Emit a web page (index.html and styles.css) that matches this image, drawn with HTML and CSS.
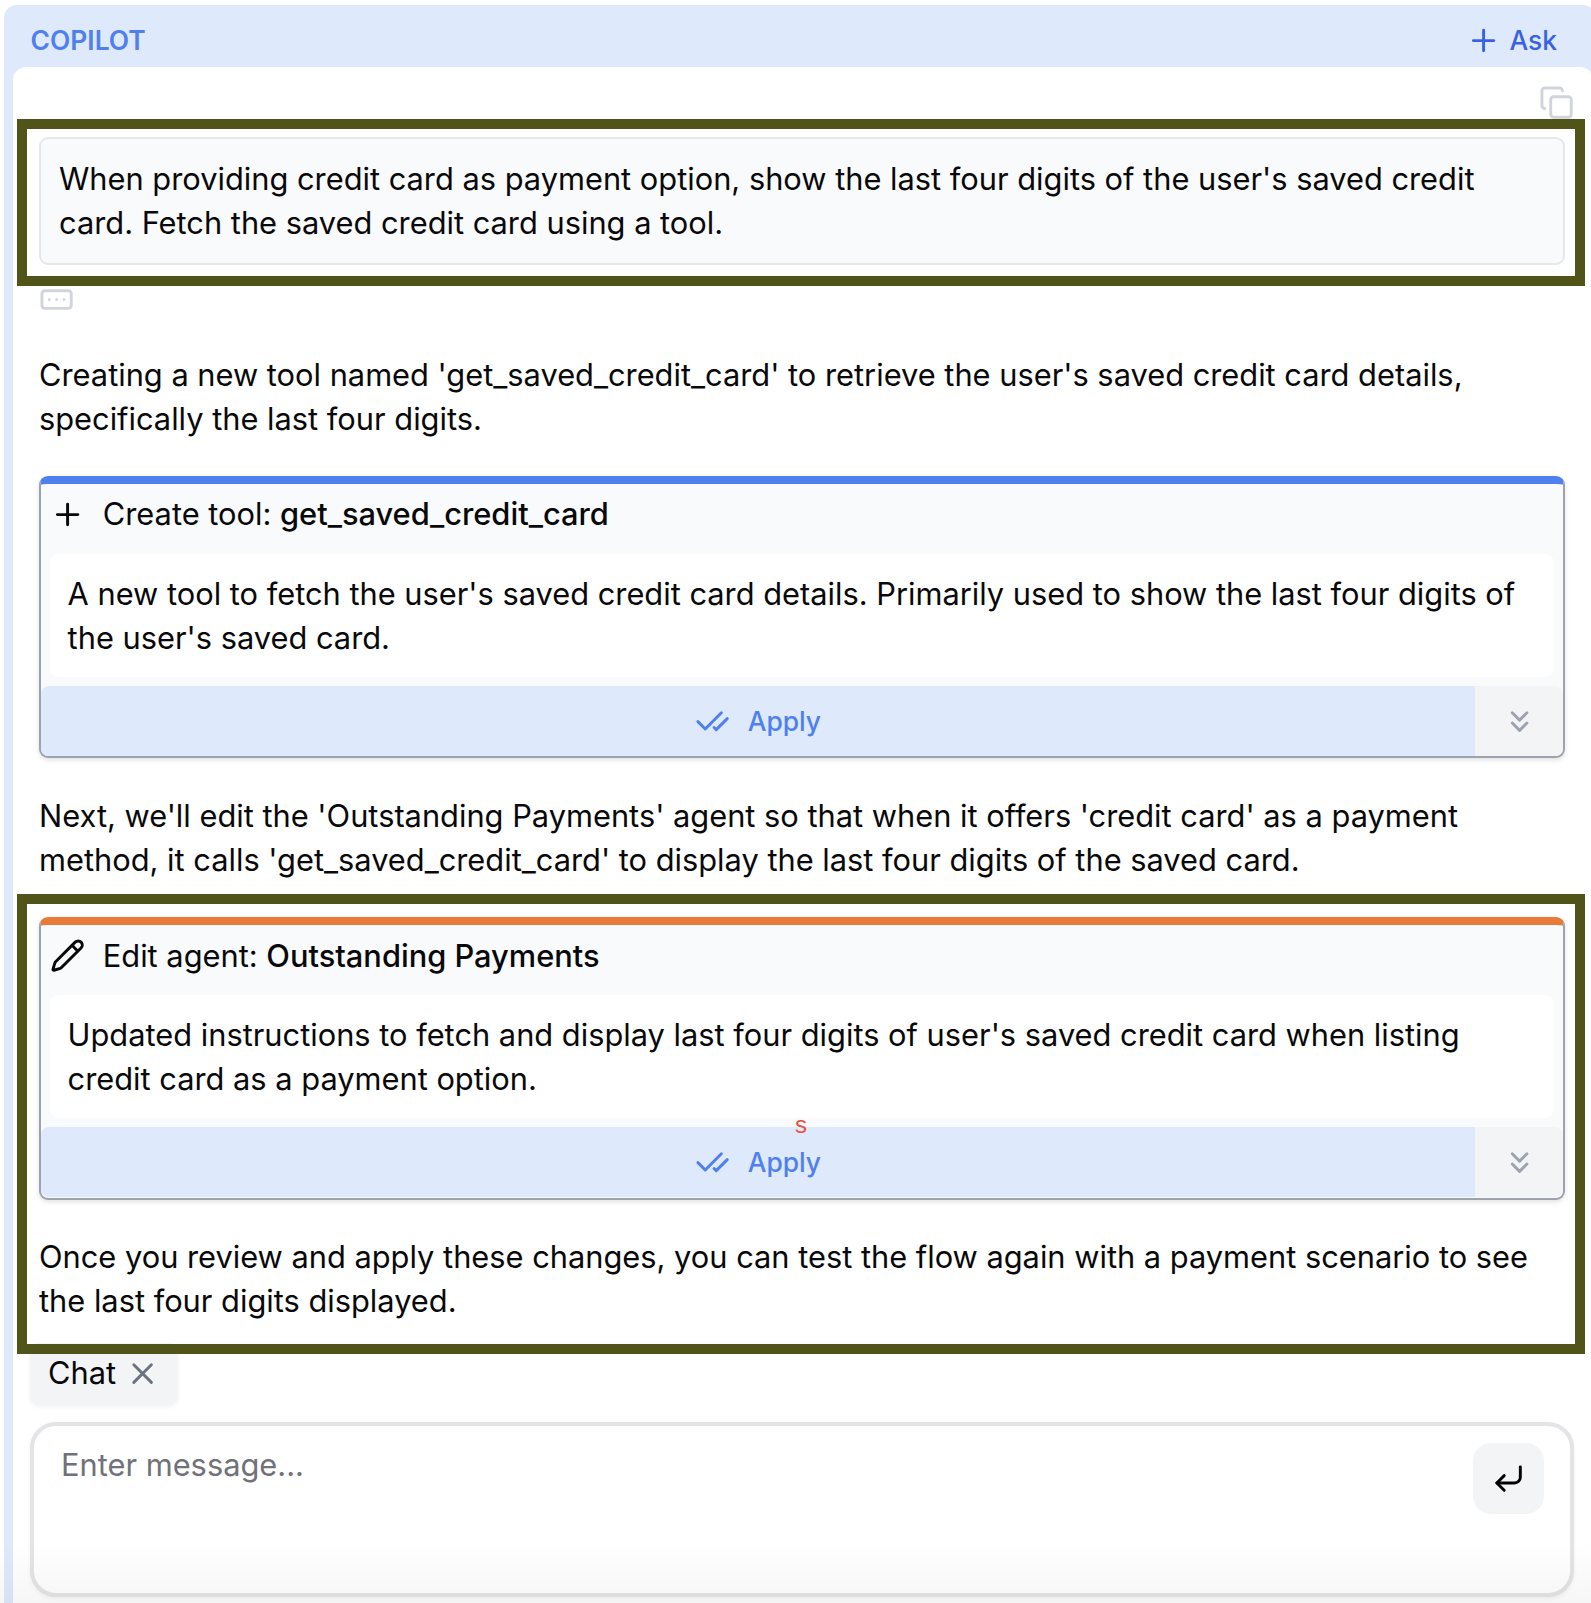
FILE: index.html
```html
<!DOCTYPE html>
<html lang="en">
<head>
<meta charset="utf-8">
<title>Copilot</title>
<link rel="stylesheet" href="styles.css">
</head>
<body>
<svg class="sprite" aria-hidden="true">
  <symbol id="plus" viewBox="0 0 24 24"><path d="M5 12h14M12 5v14"/></symbol>
  <symbol id="x" viewBox="0 0 24 24"><path d="M18 6 6 18M6 6l12 12"/></symbol>
  <symbol id="copy" viewBox="0 0 24 24"><rect x="8" y="8" width="14" height="14" rx="2"/><path d="M4 16c-1.1 0-2-.9-2-2V4c0-1.1.9-2 2-2h10c1.1 0 2 .9 2 2"/></symbol>
  <symbol id="dots" viewBox="0 0 24 24"><rect x="2" y="6" width="20" height="12" rx="2"/><path d="M12 12h.01M17 12h.01M7 12h.01"/></symbol>
  <symbol id="pencil" viewBox="0 0 24 24"><path d="M21.174 6.812a1 1 0 0 0-3.986-3.987L3.842 16.174a2 2 0 0 0-.5.83l-1.321 4.352a.5.5 0 0 0 .623.622l4.353-1.32a2 2 0 0 0 .83-.497zM15 5l4 4"/></symbol>
  <symbol id="checks" viewBox="0 0 24 24"><path d="M18 6 7 17l-5-5M22 10l-7.5 7.5L13 16"/></symbol>
  <symbol id="chevrons" viewBox="0 0 24 24"><path d="m7 6 5 5 5-5M7 13l5 5 5-5"/></symbol>
  <symbol id="enter" viewBox="0 0 24 24"><path d="m9 10-5 5 5 5"/><path d="M20 4v7a4 4 0 0 1-4 4H4"/></symbol>
</svg>
<main class="panel">
  <header class="panel-header">
    <h1 class="panel-title">COPILOT</h1>
    <button class="ask"><svg class="icon"><use href="#plus"/></svg><span>Ask</span></button>
  </header>
  <section class="panel-body">
    <div class="toolbar"><svg class="icon"><use href="#copy"/></svg></div>
    <div class="messages">
      <div class="prompt">When providing credit card as payment option, show the last four digits of the user's saved credit<br>card. Fetch the saved credit card using a tool.</div>
      <svg class="icon thinking"><use href="#dots"/></svg>
      <div class="reply">
        <p>Creating a new tool named 'get_saved_credit_card' to retrieve the user's saved credit card details,<br>specifically the last four digits.</p>
        <article class="card card-create">
          <div class="card-head"><svg class="icon"><use href="#plus"/></svg><div>Create tool: <b>get_saved_credit_card</b></div></div>
          <div class="card-text">A new tool to fetch the user's saved credit card details. Primarily used to show the last four digits of<br>the user's saved card.</div>
          <div class="card-foot">
            <button class="apply"><svg class="icon"><use href="#checks"/></svg><span>Apply</span></button>
            <button class="more"><svg class="icon"><use href="#chevrons"/></svg></button>
          </div>
        </article>
        <p>Next, we'll edit the 'Outstanding Payments' agent so that when it offers 'credit card' as a payment<br>method, it calls 'get_saved_credit_card' to display the last four digits of the saved card.</p>
        <article class="card card-edit">
          <div class="card-head"><svg class="icon"><use href="#pencil"/></svg><div>Edit agent: <b>Outstanding Payments</b></div></div>
          <div class="card-text">Updated instructions to fetch and display last four digits of user's saved credit card when listing<br>credit card as a payment option.</div>
          <div class="card-foot">
            <button class="apply"><svg class="icon"><use href="#checks"/></svg><span>Apply</span></button>
            <button class="more"><svg class="icon"><use href="#chevrons"/></svg></button>
          </div>
        </article>
        <p>Once you review and apply these changes, you can test the flow again with a payment scenario to see<br>the last four digits displayed.</p>
      </div>
    </div>
    <div class="composer">
      <div class="tag"><span>Chat</span><svg class="icon"><use href="#x"/></svg></div>
      <div class="input">
        <div class="placeholder">Enter message...</div>
        <button class="send"><svg class="icon"><use href="#enter"/></svg></button>
      </div>
    </div>
  </section>
</main>
<div class="callout callout-prompt"></div>
<div class="callout callout-edit"></div>
<div class="note">s</div>
<div class="fade"></div>
</body>
</html>
```

FILE: styles.css
```css
* { box-sizing: border-box; }

body {
  margin: 0;
  height: 1603px;
  padding: 5px 0 0 4px;
  position: relative;
  overflow: hidden;
  background: #fff;
  color: #09090b;
  font: 400 30.8px/44px Inter, "Liberation Sans", sans-serif;
  white-space: nowrap;
}

h1, p { margin: 0; }
b { font-weight: 500; }

button {
  border: 0;
  padding: 0;
  background: none;
  color: inherit;
  font: inherit;
  display: flex;
  align-items: center;
  justify-content: center;
}

.sprite { display: none; }

.icon {
  display: block;
  width: 35.2px;
  height: 35.2px;
  flex: none;
  fill: none;
  stroke: currentColor;
  stroke-width: 2;
  stroke-linecap: round;
  stroke-linejoin: round;
}

.panel {
  width: 1592px;
  height: 1640px;
  padding: 0 0 0 9px;
  border-radius: 13px;
  background: #dee9fc;
}

.panel-header {
  height: 62px;
  padding: 13px 39px 0 17.6px;
  display: flex;
  align-items: flex-start;
  justify-content: space-between;
  font-size: 26.4px;
}

.panel-title {
  font-size: inherit;
  font-weight: 600;
  color: #4e80ee;
}

.ask {
  gap: 8px;
  font-weight: 500;
  color: #3862e3;
}

.ask .icon { margin-top: 1px; }

.panel-body {
  width: 1580px;
  height: 1570px;
  border-radius: 13px;
  background: #fff;
}

.toolbar {
  height: 70px;
  padding: 18px 19px 0 0;
  display: flex;
  justify-content: flex-end;
  color: #d1d5db;
}

.messages {
  width: 1552px;
  height: 1206px;
  padding-left: 26px;
}

.prompt {
  height: 128px;
  padding: 18px;
  border: 2px solid #e5e7eb;
  border-radius: 9px;
  background: #f9fafc;
}

.thinking {
  margin: 17px 0 36px;
  color: #d1d5db;
}

.reply {
  display: flex;
  flex-direction: column;
  gap: 35.2px;
}

.card {
  height: 282.6px;
  border: 2px solid #9ca3af;
  border-top-width: 8px;
  border-radius: 9px;
  background: #f9fafc;
  box-shadow: 0 2px 5px rgba(0, 0, 0, .12);
}

.card-create {
  height: 282px;
  margin-bottom: .6px;
  border-top-color: #4e80ee;
}

.card-create .card-head div { margin-top: -.8px; }

.card-edit { border-top-color: #e87b37; }

.card-head {
  height: 69.8px;
  padding: 8.2px 9px 0;
  display: flex;
  gap: 17.6px;
}

.card-head .icon { margin-top: 4.4px; }

.card-text {
  height: 123px;
  margin: 0 9px 8.8px;
  padding: 17.6px;
  border-radius: 9px;
  background: #fff;
}

.card-foot {
  height: 70.4px;
  display: flex;
  overflow: hidden;
  border-radius: 8px;
}

.apply {
  flex: 1;
  gap: 17.6px;
  background: #dee9fc;
  color: #4e80ee;
  font-size: 26.4px;
  font-weight: 500;
}

.apply span { margin-top: -.6px; }

.more {
  width: 88px;
  padding-left: 2px;
  background: #f3f4f6;
  color: #9ca3af;
}

.composer {
  width: 1561px;
  padding-left: 17px;
}

.tag {
  width: 148px;
  height: 62px;
  padding-left: 18px;
  display: flex;
  align-items: center;
  gap: 9px;
  border-radius: 9px;
  background: #f3f4f6;
  box-shadow: 0 2px 4px rgba(0, 0, 0, .05);
}

.tag span { margin-top: -2px; }

.tag .icon { color: #6b7280; }

.input {
  height: 175px;
  margin-top: 17px;
  padding: 17px 26px 0 27px;
  display: flex;
  justify-content: space-between;
  border: 4px solid #e4e4e7;
  border-radius: 26px;
  background: #fff;
  box-shadow: 0 2px 4px rgba(0, 0, 0, .05);
}

.placeholder { color: #71717a; }

.send {
  width: 71px;
  height: 71px;
  border-radius: 18px;
  background: #f3f4f6;
  color: #000;
}

/* Annotations drawn over the panel */
.callout {
  position: absolute;
  left: 17px;
  width: 1568px;
  border: 10px solid #505418;
}

.callout-prompt { top: 119px; height: 167px; }
.callout-edit { top: 894px; height: 460px; }

.note {
  position: absolute;
  left: 795px;
  top: 1113px;
  font: 24px/24px "Liberation Sans", sans-serif;
  color: #e9503e;
}

.fade {
  position: absolute;
  left: 0;
  right: 0;
  bottom: 0;
  height: 62px;
  background: linear-gradient(rgba(0, 0, 0, 0), rgba(0, 0, 0, .035));
}
```
